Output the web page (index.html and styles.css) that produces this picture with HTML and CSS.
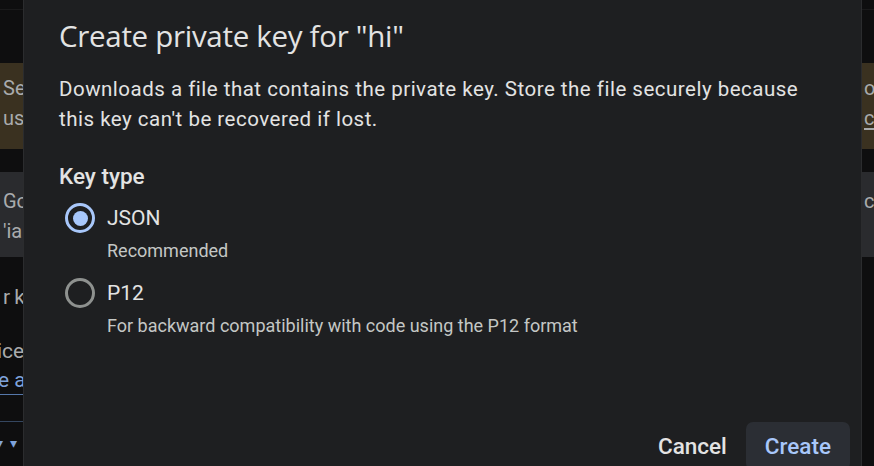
FILE: index.html
```html
<!DOCTYPE html>
<html>
<head>
<meta charset="utf-8">
<link rel="stylesheet" href="styles.css">
</head>
<body>
<div class="page">
  <div class="band band-top"></div>
  <div class="band band-warn">
    <div class="side left"><div>Service account keys could pose a security risk if compromised.</div><div>use Workload Identity Federation instead</div></div>
    <div class="side right"><div>o</div><div class="ul">ce</div></div>
  </div>
  <div class="band band-gap"></div>
  <div class="band band-info">
    <div class="side left"><div>Google automatically disables service account keys</div><div>'iam.managed.disableServiceAccountKeyCreation'</div></div>
    <div class="side right"><div>cl</div><div></div></div>
  </div>
  <div class="band band-rest">
    <div class="frag f1">r key</div>
    <div class="frag f2">ice account</div>
    <div class="frag f3 link">e a key</div>
    <div class="rule"></div>
    <div class="frag f4 link">▾ ▾</div>
  </div>

  <div class="dialog">
    <h1 class="title">Create private key for "hi"</h1>
    <p class="desc">Downloads a file that contains the private key. Store the file securely because this key can't be recovered if lost.</p>
    <div class="label">Key type</div>
    <div class="option">
      <span class="radio checked"><span class="dot"></span></span>
      <span class="opt-name">JSON</span>
    </div>
    <div class="hint">Recommended</div>
    <div class="option second">
      <span class="radio"></span>
      <span class="opt-name">P12</span>
    </div>
    <div class="hint">For backward compatibility with code using the P12 format</div>
    <div class="actions">
      <button class="btn cancel">Cancel</button>
      <button class="btn create">Create</button>
    </div>
  </div>
</div>
</body>
</html>
```
FILE: styles.css
```css
html, body {
  margin: 0;
  padding: 0;
  background: #0e0e0f;
  overflow: hidden;
}
.page {
  position: relative;
  width: 874px;
  height: 466px;
  overflow: hidden;
  font-family: Roboto, "Liberation Sans", sans-serif;
  color: #a9abad;
}
.band {
  display: flex;
  justify-content: space-between;
  font-size: 20px;
  line-height: 30px;
}
.band-top {
  border-top: 1px solid #1a1a1b;
  margin-top: 9px;
  height: 53px;
  background: #0e0e0f;
}
.band-warn {
  height: 86px;
  background: #3a3120;
}
.band-gap { height: 23px; }
.band-info {
  height: 85px;
  background: #2a2b2e;
}
.side { padding-top: 10px; white-space: nowrap; overflow: hidden; }
.side.left { padding-left: 3px; width: 20px; }
.side.right { width: 10px; }
.band-info .side { padding-top: 14px; }
.ul { text-decoration: underline; text-underline-offset: 3px; }
.band-rest {
  display: block;
  height: 210px;
  font-size: 21px;
}
.frag { white-space: nowrap; overflow: hidden; width: 23px; }
.f1 { padding-top: 25px; padding-left: 3px; width: 20px; letter-spacing: -0.5px; }
.f2 { padding-top: 24px; text-indent: -3px; }
.f3 { text-indent: -2px; border-bottom: 1px solid #5577aa; line-height: 28px; }
.link { color: #7fa3dc; }
.rule { margin-top: 26px; width: 23px; border-top: 1px solid #34465f; }
.f4 { padding-top: 6px; font-size: 14px; text-indent: -4px; letter-spacing: 2px; }

.dialog {
  position: absolute;
  left: 23px;
  top: -20px;
  width: 839px;
  height: 520px;
  background: #1e1f21;
  border: 1px solid #2b2c2e;
  padding: 37px 11px 0 35px;
  box-sizing: border-box;
  color: #e3e3e3;
}
.title {
  margin: 0;
  font-family: "Open Sans", Roboto, sans-serif;
  font-weight: 400;
  font-size: 29.5px;
  line-height: 36px;
  letter-spacing: -0.3px;
}
.desc {
  margin: 20px 0 0;
  font-size: 20.5px;
  line-height: 30px;
  letter-spacing: 0.5px;
  width: 752px;
}
.label {
  margin-top: 28px;
  font-size: 22.5px;
  line-height: 28px;
  font-weight: 500;
}
.option {
  margin-top: 8px;
  height: 40px;
  display: flex;
  align-items: center;
  gap: 6px;
}
.option.second { margin-top: 10px; }
.radio {
  width: 42px;
  height: 40px;
  display: flex;
  align-items: center;
  justify-content: center;
  position: relative;
}
.radio::before {
  content: "";
  width: 24px;
  height: 24px;
  border-radius: 50%;
  border: 3px solid #8e918f;
}
.radio.checked::before { border-color: #a8c7fa; }
.radio .dot {
  position: absolute;
  width: 15px;
  height: 15px;
  border-radius: 50%;
  background: #a8c7fa;
  left: 13.5px;
  top: 12.5px;
}
.opt-name {
  font-size: 21px;
  line-height: 28px;
}
.hint {
  margin: 1px 0 0 48px;
  font-size: 18px;
  line-height: 24px;
  color: #c4c7c5;
}
.actions {
  margin-top: 84px;
  display: flex;
  justify-content: flex-end;
}
.btn {
  font-family: Roboto, "Liberation Sans", sans-serif;
  font-size: 22.5px;
  font-weight: 500;
  height: 48px;
  padding: 0 19px;
  border: none;
  border-radius: 7px;
  background: transparent;
  color: #e3e3e3;
}
.btn.create {
  background: #2b2e34;
  color: #a8c7fa;
}
```
